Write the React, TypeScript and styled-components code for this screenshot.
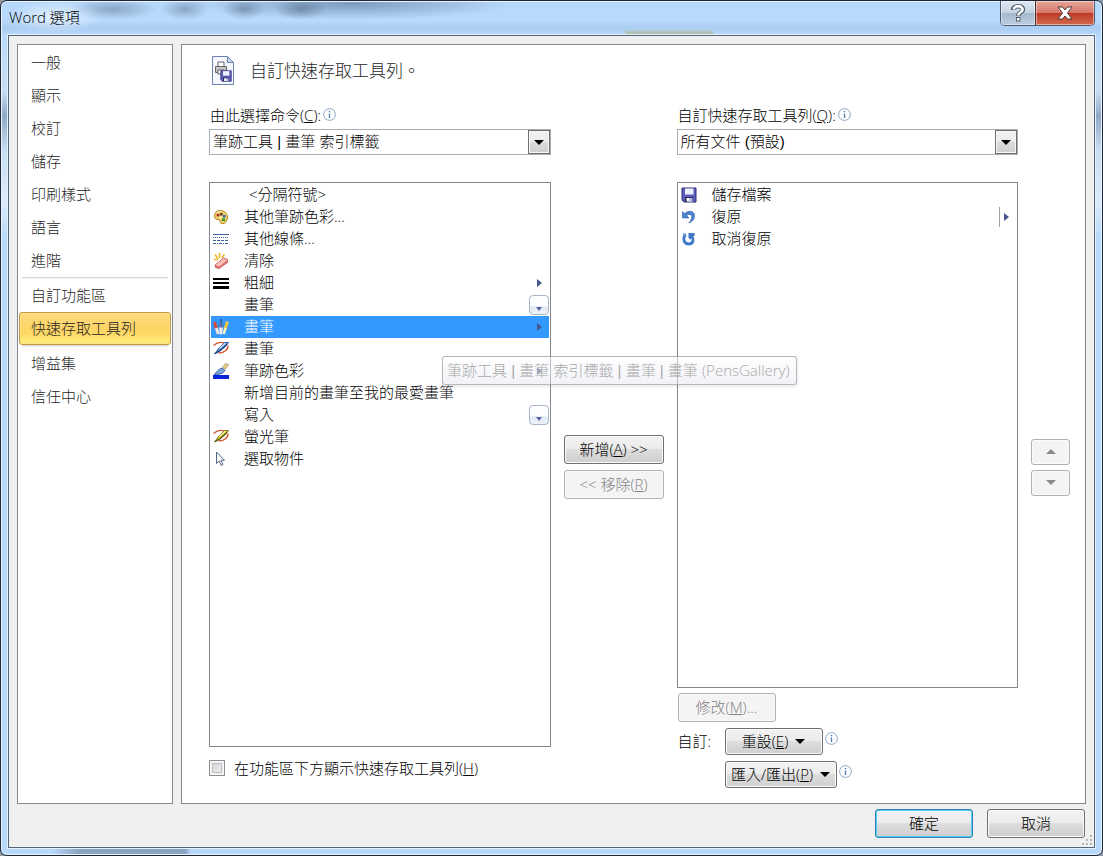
import React from "react";
import styled, { createGlobalStyle, css } from "styled-components";

const ink = "#000";
const line = "#828790";

const GlobalStyle = createGlobalStyle`
  * { box-sizing: border-box; }
  body {
    margin: 0;
    background: #8d98a5;
    color: ${ink};
    font: 300 15px/22px "Open Sans", "Noto Sans CJK TC", sans-serif;
  }
  button, select, input { font: inherit; color: inherit; margin: 0; }
  ul { list-style: none; margin: 0; padding: 0; }
`;

const WindowFrame = styled.div`
  min-height: 100vh;
  display: flex;
  flex-direction: column;
  padding: 0 7px 7px;
  border: 1px solid #1d2736;
  border-radius: 7px;
  box-shadow: inset 0 0 0 1px #e9f4ff;
  background:
    radial-gradient(ellipse 44px 11px at 112px 8px, rgba(70, 90, 115, 0.4), transparent),
    radial-gradient(ellipse 24px 11px at 184px 8px, rgba(70, 90, 115, 0.4), transparent),
    radial-gradient(ellipse 22px 11px at 243px 8px, rgba(70, 90, 115, 0.45), transparent),
    radial-gradient(ellipse 26px 11px at 300px 8px, rgba(70, 90, 115, 0.45), transparent),
    radial-gradient(ellipse 160px 16px at 350px 3px, rgba(80, 105, 140, 0.55), transparent),
    linear-gradient(rgba(176, 185, 150, 0.3), #b0b996) 624px 29px / 88px 5px no-repeat,
    linear-gradient(90deg, transparent, #8aa5c2 20%, #8aa5c2 96%, transparent) 50px 100% / 140px 7px no-repeat,
    linear-gradient(#b6d8fb, #b9dafd 20px, #abcdf2 26px, #b9dafc 36px, #c9def3 90px, #8fa9c6 115px, #c9def3 150px, #dcebfa 200px, #b9d9fb 236px);
`;

const TitleBar = styled.header`
  display: flex;
  align-items: flex-start;
  justify-content: space-between;
  height: 34px;
`;

const WindowTitle = styled.h1`
  margin: 0;
  padding: 5px 24px 5px 1px;
  font-size: 15px;
  font-weight: inherit;
  line-height: 22px;
  color: #000;
  background: radial-gradient(ellipse at center, rgba(255, 255, 255, 0.6), transparent 70%);
`;

const CaptionButtons = styled.div`
  display: flex;
  border: 1px solid #4b5a6c;
  border-top: 0;
  border-radius: 0 0 5px 5px;
  overflow: hidden;
`;

const CaptionButton = styled.button<{ $close?: boolean }>`
  display: grid;
  place-items: center;
  width: ${(p) => (p.$close ? 59 : 34)}px;
  height: 24px;
  padding: 0;
  border: 0;
  box-shadow: inset 0 0 0 1px rgba(255, 255, 255, 0.45);
  background: linear-gradient(#dbe6f1, #c5d4e4 48%, #a4b8cd 50%, #bccfe2);
  ${(p) =>
    p.$close &&
    css`
      border-left: 1px solid #4b2a2a;
      background: linear-gradient(#e6a699, #d5776a 48%, #bd3826 50%, #d46a4c);
    `}
`;

const Client = styled.div`
  position: relative;
  flex: 1;
  display: flex;
  flex-direction: column;
  padding: 8px;
  border: 1px solid #56667a;
  background: #f0f0f0;
  box-shadow: 0 0 0 1px #e4f1fe;
`;

const Main = styled.div`
  flex: 1;
  display: flex;
  gap: 8px;
`;

const Nav = styled.nav`
  flex: none;
  width: 156px;
  padding: 1px;
  border: 1px solid ${line};
  background: #fff;
`;

const NavItem = styled.button<{ $active?: boolean }>`
  display: block;
  width: 100%;
  height: 33px;
  padding: 0 11px 2px;
  border: 1px solid transparent;
  border-radius: 3px;
  background: none;
  color: #262626;
  text-align: left;
  ${(p) =>
    p.$active &&
    css`
      border-color: #c2993b;
      background: linear-gradient(#fcdb7c, #fdd567 50%, #fed864 65%, #fff07e);
      box-shadow: inset 0 0 0 1px #fde08a;
    `}
`;

const NavRule = styled.hr`
  height: 2px;
  margin: 0 3px;
  border: 0;
  border-bottom: 1px solid #f0f0f0;
  background: #dcdcdc;
`;

const Panel = styled.main`
  flex: 1;
  display: flex;
  flex-direction: column;
  padding: 9px 15px 15px 27px;
  border: 1px solid ${line};
  background: #fff;
`;

const Heading = styled.div`
  display: flex;
  align-items: center;
  gap: 15px;
  height: 34px;
  margin-bottom: 15px;
  padding-left: 2px;
  color: #262626;

  h2 {
    margin: 0;
    font-size: 17px;
    font-weight: inherit;
  }
`;

const Columns = styled.div`
  flex: 1;
  display: grid;
  grid-template-columns: minmax(0, 1fr) 100px minmax(0, 1fr) 39px;
  gap: 13px;
`;

const Column = styled.section`
  display: flex;
  flex-direction: column;
`;

const FieldLabel = styled.div`
  display: flex;
  align-items: center;
  gap: 2px;
  height: 26px;
  padding: 0 0 2px 1px;
`;

const SelectBox = styled.div`
  display: grid;
  align-items: center;
  height: 26px;
  margin-bottom: 27px;
  border: 1px solid #abadb3;

  select, span { grid-area: 1 / 1; }
  select {
    width: 100%;
    height: 24px;
    padding: 0 26px 0 3px;
    border: 0;
    appearance: none;
    background: #fff;
    color: #000;
    font-family: "Liberation Sans", "Noto Sans CJK TC", sans-serif;
  }
`;

const SelectArrow = styled.span`
  display: grid;
  place-items: center;
  justify-self: end;
  width: 22px;
  height: 24px;
  border: 1px solid #707070;
  background: linear-gradient(#f2f2f2, #ebebeb 48%, #dcdcdc 50%, #cfcfcf);
  box-shadow: inset 0 0 0 1px #f7f7f7;
  pointer-events: none;
`;

const ListBox = styled.ul`
  flex: 1;
  && { padding: 1px; }
  border: 1px solid ${line};
  background: #fff;
`;

const Row = styled.li<{ $selected?: boolean }>`
  position: relative;
  display: grid;
  grid-template-columns: 16px 1fr auto;
  column-gap: 15px;
  align-items: center;
  height: 22px;
  padding-left: 2px;
  background: ${(p) => (p.$selected ? "#3399ff" : "none")};
  color: ${(p) => (p.$selected ? "#fff" : "inherit")};
`;

const RowText = styled.span<{ $indent?: boolean }>`
  padding: 0 0 2px ${(p) => (p.$indent ? 5 : 0)}px;
  line-height: 20px;
  white-space: nowrap;
`;

const FlyoutMark = styled.span<{ $split?: boolean }>`
  display: flex;
  align-items: center;
  height: 20px;
  padding: 0 7px 0 4px;
  border-left: 1px solid ${(p) => (p.$split ? "#a0a0a0" : "transparent")};
`;

const GalleryMark = styled.span`
  display: grid;
  justify-items: center;
  align-items: end;
  width: 20px;
  height: 20px;
  padding-bottom: 3px;
  border: 1px solid #a9b4c6;
  border-radius: 4px;
  background: linear-gradient(#fdfeff 55%, #dfe8f3 60%, #eef3f9);
`;

const Tooltip = styled.div`
  position: absolute;
  z-index: 1;
  top: 40px;
  left: 231px;
  height: 29px;
  padding: 0 6px 0 4px;
  border: 1px solid rgba(118, 118, 118, 0.5);
  border-radius: 3px;
  background: linear-gradient(rgba(255, 255, 255, 0.5), rgba(228, 229, 240, 0.5));
  box-shadow: 1px 2px 3px rgba(0, 0, 0, 0.08);
  color: #a8a8a8;
  font-family: "Liberation Sans", "Noto Sans CJK TC", sans-serif;
  line-height: 27px;
  white-space: nowrap;
`;

const Latin = styled.span`
  font-family: "Open Sans", sans-serif;
`;

const ButtonStack = styled.div<{ $gap: number }>`
  display: flex;
  flex-direction: column;
  justify-content: center;
  gap: ${(p) => p.$gap}px;
  padding-top: 43px;
`;

const PushButton = styled.button<{ $width: number; $height?: number; $default?: boolean }>`
  display: inline-flex;
  align-items: center;
  justify-content: center;
  gap: 7px;
  flex: none;
  width: ${(p) => p.$width}px;
  height: ${(p) => p.$height ?? 29}px;
  padding: 0;
  border: 1px solid ${(p) => (p.$default ? "#3c7fb1" : "#707070")};
  border-radius: 3px;
  background: linear-gradient(#f2f2f2, #ebebeb 48%, #dddddd 50%, #cfcfcf);
  box-shadow: inset 0 0 0 1px ${(p) => (p.$default ? "#48d0f5" : "#fafafa")};
  color: #000;
  white-space: nowrap;

  &:disabled {
    border-color: #adb2b5;
    background: #f4f4f4;
    color: #838383;
  }

  span { padding-bottom: 1px; }
`;

const CheckRow = styled.label`
  display: flex;
  align-items: center;
  gap: 9px;
  height: 24px;
  margin: 9px 0 8px;

  span { padding-bottom: 1px; }
`;

const CheckBox = styled.input`
  appearance: none;
  width: 16px;
  height: 16px;
  border: 1px solid #8e8f8f;
  background: linear-gradient(135deg, #c9ced4, #f6f6f6);
  box-shadow: inset 0 0 0 2px #f4f4f4, inset 0 0 0 3px #bcc0c5;
`;

const RightActions = styled.div`
  display: flex;
  flex-direction: column;
  align-items: flex-start;
  gap: 6px;
  padding: 5px 0 0 1px;
`;

const CustomizeGrid = styled.div`
  display: grid;
  grid-template-columns: 44px auto;
  gap: 6px 3px;
  align-items: center;
`;

const GridLabel = styled.span`
  padding-bottom: 2px;
`;

const WithInfo = styled.div`
  grid-column: 2;
  display: flex;
  gap: 2px;
`;

const Info = styled.span`
  display: flex;
  height: 22px;
  padding-bottom: 1px;
  align-items: center;
`;

const Footer = styled.footer`
  display: flex;
  justify-content: flex-end;
  gap: 14px;
  padding: 5px 1px 1px 0;
`;

const Grip = styled.svg`
  position: absolute;
  right: 1px;
  bottom: 1px;
`;

const Triangle = ({ dir = "down", fill = "#000", w = 10, h = 5 }: { dir?: "down" | "up" | "right"; fill?: string; w?: number; h?: number }) => {
  const points = {
    down: `0,0 ${w},0 ${w / 2},${h}`,
    up: `0,${h} ${w},${h} ${w / 2},0`,
    right: `0,0 ${w},${h / 2} 0,${h}`,
  }[dir];
  return (
    <svg width={w} height={h} aria-hidden="true">
      <polygon points={points} fill={fill} />
    </svg>
  );
};

const InfoIcon = () => (
  <Info>
    <svg width="13" height="13" viewBox="0 0 13 13" aria-hidden="true">
      <circle cx="6.5" cy="6.5" r="5.9" fill="#fbfdff" stroke="#8fa9c4" />
      <path d="M6.5 5.5v4.5" stroke="#5580b0" strokeWidth="1.3" />
      <circle cx="6.5" cy="3.6" r="0.8" fill="#5580b0" />
    </svg>
  </Info>
);

const Floppy = () => (
  <>
    <path d="M1 1h14v14H3l-2-2z" fill="#5c5db8" stroke="#2f2f80" />
    <path d="M4 1.5h8.5v6H4z" fill="#eef1fb" />
    <path d="M4 10h8v5H4z" fill="#26265e" />
    <path d="M5.500 11h2.500v3.500H5.500z" fill="#fff" />
    <path d="M8 11h3.500v4H8z" fill="#b9bddf" />
  </>
);

const Nib = ({ dark, mid, light, loop }: { dark: string; mid: string; light: string; loop: string }) => (
  <>
    <path d="M0.500 4.500C3.500 1.800 8 1 11 1.800" stroke={loop} strokeWidth="1.300" />
    <path d="M14.800 4.500c.8 3.500-3 7.500-9 7.500" stroke={loop} strokeWidth="1.500" />
    <path d="M2 12.500L5.500 7.500 11.500 1.500h4L12.500 5.500 6.500 10.500z" fill={mid} stroke={dark} strokeWidth=".8" />
    <path d="M1.500 13L7 9.500l7-6.500" stroke={dark} strokeWidth="1.100" />
    <path d="M6.500 7.500L12.500 2.200" stroke={light} strokeWidth="1.300" />
  </>
);

const glyphs: Record<string, React.ReactNode> = {
  palette: (
    <>
      <path d="M7 1.500C3.500 1.500 1.500 4 1.500 7c0 2.800 2 4 3.500 3.600 1.600-.3 2 .8 2 2 0 1.600 1.400 2.200 3 2 3-.4 4.500-3.200 4.500-6.600C14.500 4.500 11.500 1.500 7 1.500z" fill="#f0cf62" stroke="#b58a2b" />
      <path d="M3 5C4.200 3.200 6 2.700 8 2.700" stroke="#fff6c8" />
      <circle cx="5" cy="6" r="1.500" fill="#b3282d" />
      <rect x="7" y="4" width="2.500" height="2.500" fill="#5b3a30" />
      <rect x="10" y="6" width="2.500" height="2.500" fill="#2f63c4" />
      <rect x="9" y="9.500" width="3" height="2.500" fill="#2e9a3a" />
      <circle cx="7.500" cy="8.500" r="1" fill="#fff" />
    </>
  ),
  dashes: (
    <g stroke="#3b5fa0">
      <path d="M0 3.500h16" />
      <path d="M0 6.500h16" strokeDasharray="1 1" />
      <path d="M0 9.500h16" strokeDasharray="3 1" />
      <path d="M0 12.500h16" strokeDasharray="3 1 1 1" />
    </g>
  ),
  eraser: (
    <>
      <path d="M6.500 0v5M2 1.500l3 4M11.500 1.500l-3 3.500M1 6.500h4" stroke="#f0b323" strokeWidth="1.500" />
      <path d="M2 12L10.500 5l4 1.500v3l-8.500 6-3.500-1z" fill="#e2726f" stroke="#c04f50" strokeWidth=".8" />
      <path d="M2.500 12l8-6.500 3.700 1.500-8 6.400z" fill="#f9c0ba" />
    </>
  ),
  weights: (
    <g fill="#000">
      <rect y="3" width="16" height="2" />
      <rect y="7" width="16" height="2" />
      <rect y="11" width="16" height="3" />
    </g>
  ),
  pens: (
    <>
      <path d="M1.500 3l2 7" stroke="#d24a3d" strokeWidth="3" />
      <path d="M3.300 9l2 6" stroke="#f5e2dc" strokeWidth="3" />
      <path d="M8 0v9" stroke="#3c63aa" strokeWidth="2" />
      <path d="M5.500 4.500h5v4h-5z" fill="#5478b8" />
      <path d="M6 8.500h4l-.8 7H6.800z" fill="#e3eaf5" />
      <path d="M14.500 2.500l-2.500 8" stroke="#f1c644" strokeWidth="3" />
      <path d="M12.500 9l-1.800 6" stroke="#fff3c5" strokeWidth="2.500" />
    </>
  ),
  pen: <Nib dark="#1f4488" mid="#5b93dc" light="#d4e6fb" loop="#d4552f" />,
  inkColor: (
    <>
      <rect y="12" width="16" height="4" fill="#0a24d8" />
      <path d="M1 11.500c2-1 3-4.500 8-6.500l3 2.500c-2 3-5 4-11 4z" fill="#7ba5de" stroke="#3b62a6" />
      <path d="M9.500 4l3-3.500 3.500 1-4 5z" fill="#e8c97a" stroke="#8d8d8d" strokeWidth=".6" />
    </>
  ),
  highlighter: <Nib dark="#5f5a10" mid="#e3d21c" light="#fdf8a0" loop="#cf5a2f" />,
  cursor: <path d="M3.500 1v11.500l2.700-2.500 2 4.500 1.800-.9-2-4.300h3.500z" fill="#fdfdff" stroke="#536786" />,
  save: <Floppy />,
  undo: <path d="M1.500 2.500v6.500h6.500L5.700 6.500c2.400-1.700 5-1.200 5 1.300 0 2.300-1 4-3 6 3.800-1 5.800-3.500 5.800-7 0-5-6-6-9.800-2.200z" fill="#4a83d2" stroke="#2c5cab" strokeWidth=".6" />,
  redo: (
    <>
      <path d="M5 3.800C2.500 5 2.700 8 3.200 10c.8 2.200 2.600 3 4.500 3s3.700-1 4.300-3c.4-1.800.2-3-1-4.500" stroke="#3f78ca" strokeWidth="2.800" />
      <path d="M7.500 2h6v2.500L11.500 6 9.500 8.500 7.500 7z" fill="#3f78ca" />
      <path d="M1.500 2.500h3.500v2H2.500z" fill="#6d9be0" />
    </>
  ),
};

const Glyph = ({ name }: { name?: string }) => (
  <svg width="16" height="16" viewBox="0 0 16 16" fill="none" aria-hidden="true">
    {name && glyphs[name]}
  </svg>
);

type Command = { text: string; icon?: string; mark?: "flyout" | "split" | "gallery"; indent?: boolean; selected?: boolean };

const commands: Command[] = [
  { text: "<分隔符號>", indent: true },
  { text: "其他筆跡色彩...", icon: "palette" },
  { text: "其他線條...", icon: "dashes" },
  { text: "清除", icon: "eraser" },
  { text: "粗細", icon: "weights", mark: "flyout" },
  { text: "畫筆", mark: "gallery" },
  { text: "畫筆", icon: "pens", mark: "flyout", selected: true },
  { text: "畫筆", icon: "pen" },
  { text: "筆跡色彩", icon: "inkColor", mark: "flyout" },
  { text: "新增目前的畫筆至我的最愛畫筆" },
  { text: "寫入", mark: "gallery" },
  { text: "螢光筆", icon: "highlighter" },
  { text: "選取物件", icon: "cursor" },
];

const toolbar: Command[] = [
  { text: "儲存檔案", icon: "save" },
  { text: "復原", icon: "undo", mark: "split" },
  { text: "取消復原", icon: "redo" },
];

const CommandList = ({ items, label }: { items: Command[]; label: string }) => (
  <ListBox role="listbox" aria-label={label}>
    {items.map((c, i) => (
      <Row key={i} role="option" aria-selected={!!c.selected} $selected={c.selected}>
        <Glyph name={c.icon} />
        <RowText $indent={c.indent}>{c.text}</RowText>
        {c.mark === "gallery" && (
          <GalleryMark>
            <Triangle w={6} h={4} fill="#5b64a8" />
          </GalleryMark>
        )}
        {(c.mark === "flyout" || c.mark === "split") && (
          <FlyoutMark $split={c.mark === "split"}>
            <Triangle dir="right" w={5} h={8} fill="#46578f" />
          </FlyoutMark>
        )}
        {c.selected && (
          <Tooltip role="tooltip">
            筆跡工具 | 畫筆 索引標籤 | 畫筆 | 畫筆 <Latin>(PensGallery)</Latin>
          </Tooltip>
        )}
      </Row>
    ))}
  </ListBox>
);

const navGroups = [
  ["一般", "顯示", "校訂", "儲存", "印刷樣式", "語言", "進階"],
  ["自訂功能區", "快速存取工具列"],
  ["增益集", "信任中心"],
];

export default function App() {
  return (
    <>
      <GlobalStyle />
      <WindowFrame>
        <TitleBar>
          <WindowTitle>Word 選項</WindowTitle>
          <CaptionButtons>
            <CaptionButton aria-label="說明">
              <svg width="14" height="18" viewBox="0 0 14 18" fill="none" aria-hidden="true">
                <path d="M2 6c0-5 10-5 10-.5C12 8.500 7.200 8 7.200 12M7.200 13v4.500" stroke="#4c5866" strokeWidth="4.400" />
                <path d="M2.800 5.500c0-4.500 8.800-4.500 8.800 0C11.600 8.500 7.200 8 7.200 11.500M7.200 14v2.500" stroke="#fff" strokeWidth="2.600" />
              </svg>
            </CaptionButton>
            <CaptionButton $close aria-label="關閉">
              <svg width="16" height="14" viewBox="0 0 16 14" aria-hidden="true">
                <path d="M1 1h4.500L8 4l2.500-3H15l-4.500 6 4.500 6h-4.500L8 10l-2.500 3H1l4.500-6z" fill="#fff" stroke="#54383a" />
              </svg>
            </CaptionButton>
          </CaptionButtons>
        </TitleBar>
        <Client>
          <Main>
            <Nav>
              {navGroups.map((group, i) => (
                <React.Fragment key={i}>
                  {i > 0 && <NavRule />}
                  {group.map((name) => (
                    <NavItem key={name} $active={name === "快速存取工具列"}>
                      {name}
                    </NavItem>
                  ))}
                </React.Fragment>
              ))}
            </Nav>
            <Panel>
              <Heading>
                <svg width="24" height="32" viewBox="0 0 24 32" aria-hidden="true">
                  <path d="M1.500 1.500h15l6 6v22h-21z" fill="#f4f7fd" stroke="#6d83ab" />
                  <path d="M16.500 1.500v6h6z" fill="#c9d8ef" stroke="#6d83ab" />
                  <path d="M7 11V7h6v4" fill="#fff" stroke="#666" />
                  <path d="M4.500 11.500h11v6h-11z" fill="#c4c4c4" stroke="#666" />
                  <path d="M7 15h6v4H7z" fill="#fff" stroke="#666" />
                  <g transform="translate(9 15) scale(.75)">
                    <Floppy />
                  </g>
                </svg>
                <h2>自訂快速存取工具列。</h2>
              </Heading>
              <Columns>
                <Column>
                  <FieldLabel>
                    <label htmlFor="source">
                      由此選擇命令(<u>C</u>):
                    </label>
                    <InfoIcon />
                  </FieldLabel>
                  <SelectBox>
                    <select id="source">
                      <option>筆跡工具 | 畫筆 索引標籤</option>
                    </select>
                    <SelectArrow>
                      <Triangle />
                    </SelectArrow>
                  </SelectBox>
                  <CommandList items={commands} label="由此選擇命令" />
                  <CheckRow>
                    <CheckBox type="checkbox" />
                    <span>
                      在功能區下方顯示快速存取工具列(<u>H</u>)
                    </span>
                  </CheckRow>
                </Column>
                <ButtonStack $gap={6}>
                  <PushButton $width={100}>
                    <span>
                      新增(<u>A</u>) &gt;&gt;
                    </span>
                  </PushButton>
                  <PushButton $width={100} disabled>
                    <span>
                      &lt;&lt; 移除(<u>R</u>)
                    </span>
                  </PushButton>
                </ButtonStack>
                <Column>
                  <FieldLabel>
                    <label htmlFor="target">
                      自訂快速存取工具列(<u>Q</u>):
                    </label>
                    <InfoIcon />
                  </FieldLabel>
                  <SelectBox>
                    <select id="target">
                      <option>所有文件 (預設)</option>
                    </select>
                    <SelectArrow>
                      <Triangle />
                    </SelectArrow>
                  </SelectBox>
                  <CommandList items={toolbar} label="自訂快速存取工具列" />
                  <RightActions>
                    <PushButton $width={98} disabled>
                      <span>
                        修改(<u>M</u>)...
                      </span>
                    </PushButton>
                    <CustomizeGrid>
                      <GridLabel>自訂:</GridLabel>
                      <WithInfo>
                        <PushButton $width={98} $height={27}>
                          <span>
                            重設(<u>E</u>)
                          </span>
                          <Triangle />
                        </PushButton>
                        <InfoIcon />
                      </WithInfo>
                      <WithInfo>
                        <PushButton $width={112} $height={27}>
                          <span>
                            匯入/匯出(<u>P</u>)
                          </span>
                          <Triangle />
                        </PushButton>
                        <InfoIcon />
                      </WithInfo>
                    </CustomizeGrid>
                  </RightActions>
                </Column>
                <ButtonStack $gap={5}>
                  <PushButton $width={39} $height={26} disabled aria-label="上移">
                    <Triangle dir="up" fill="#8a8a8a" />
                  </PushButton>
                  <PushButton $width={39} $height={26} disabled aria-label="下移">
                    <Triangle fill="#8a8a8a" />
                  </PushButton>
                </ButtonStack>
              </Columns>
            </Panel>
          </Main>
          <Footer>
            <PushButton $width={98} $default>
              <span>確定</span>
            </PushButton>
            <PushButton $width={98}>
              <span>取消</span>
            </PushButton>
          </Footer>
          <Grip width="11" height="11" viewBox="0 0 11 11" fill="#b4b4b4" aria-hidden="true">
            <path d="M8 0h2v2H8zM4 4h2v2H4zM8 4h2v2H8zM0 8h2v2H0zM4 8h2v2H4zM8 8h2v2H8z" />
          </Grip>
        </Client>
      </WindowFrame>
    </>
  );
}
